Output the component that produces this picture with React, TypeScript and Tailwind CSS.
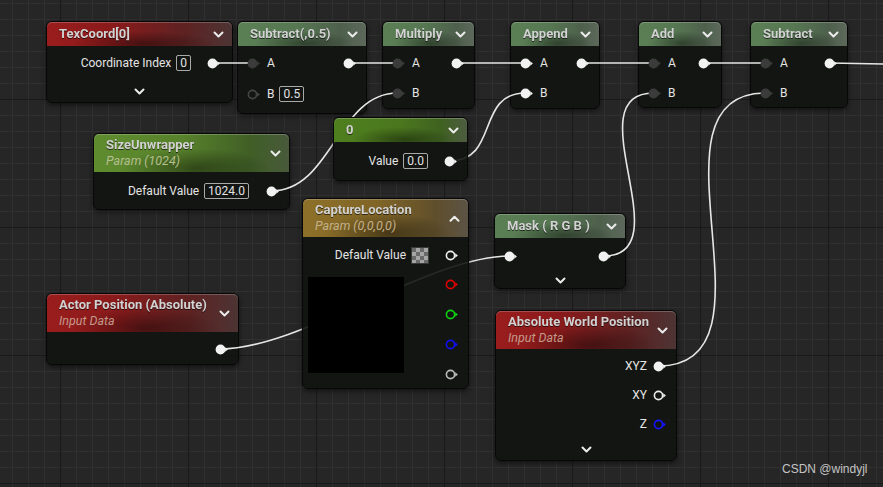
import React from "react";

type Tone = "red" | "fn" | "param" | "const" | "gold";

const TONES: Record<Tone, string> = {
  red: "bg-[linear-gradient(90deg,#9a1d1d_0%,#8a1a1b_35%,#5e2222_75%,#4d3434_100%)]",
  fn: "bg-[linear-gradient(90deg,#5b7f55_0%,#567752_45%,#4e604c_80%,#5c685b_100%)]",
  param: "bg-[linear-gradient(90deg,#5f8c2f_0%,#58822b_45%,#405f26_80%,#48593b_100%)]",
  const: "bg-[linear-gradient(90deg,#4e7f1e_0%,#4b771e_50%,#3f6220_80%,#4d5c41_100%)]",
  gold: "bg-[linear-gradient(90deg,#8d7028_0%,#806527_45%,#604f2b_80%,#5c5345_100%)]",
};

const SUBTITLE: Record<Tone, string> = {
  red: "text-[#c39a8a]",
  fn: "text-[#b0b8a8]",
  param: "text-[#b4be8e]",
  const: "text-[#b4be8e]",
  gold: "text-[#c2b08a]",
};

function Pin({ kind = "filled", color = "#f2f2f2" }: { kind?: "filled" | "empty" | "ring"; color?: string }) {
  const fill = kind === "filled" ? "#f2f2f2" : kind === "empty" ? "#3b3b3b" : "none";
  const tri = kind === "empty" ? "#3b3b3b" : kind === "ring" ? color : "#f2f2f2";
  return (
    <svg width="14" height="11" viewBox="0 0 14 11" className="relative z-20 shrink-0">
      <circle
        cx="5.5"
        cy="5.5"
        r={kind === "ring" ? 4.1 : 4.9}
        fill={fill}
        stroke={kind === "ring" ? color : "none"}
        strokeWidth={kind === "ring" ? 1.6 : 0}
      />
      <path d="M10.2 3.2 L12.9 5.5 L10.2 7.8 Z" fill={tri} />
    </svg>
  );
}

function Chevron({ up }: { up?: boolean }) {
  return (
    <svg width="11" height="7" viewBox="0 0 11 7">
      <path
        d={up ? "M1.5 5.8 L5.5 1.8 L9.5 5.8" : "M1.5 1.5 L5.5 5.5 L9.5 1.5"}
        stroke="#ececec"
        strokeWidth="2"
        fill="none"
        strokeLinecap="round"
        strokeLinejoin="round"
      />
    </svg>
  );
}

function Box({ children }: { children: React.ReactNode }) {
  return (
    <span className="rounded-[2px] border border-[#a9a9a9] px-[3px] text-[12px] leading-[16px] text-[#e2e2e2]">
      {children}
    </span>
  );
}

function Header({ tone, title, subtitle, up }: { tone: Tone; title: string; subtitle?: string; up?: boolean }) {
  return (
    <div
      className={`relative flex shrink-0 items-center justify-between rounded-t-[5px] pl-[12px] pr-[8px] shadow-[inset_0_1px_0_rgba(255,255,255,0.22)] ${TONES[tone]} ${subtitle ? "h-[38px]" : "h-[24px]"}`}
    >
      <div className="absolute inset-0 rounded-t-[5px] bg-[radial-gradient(ellipse_55%_75%_at_52%_90%,rgba(0,0,0,0.42),rgba(0,0,0,0)_70%)]" />
      <div className="relative flex flex-col">
        <span className="text-[13px] font-bold leading-[16px] text-[#d2d2d2] drop-shadow-[0_1px_0_rgba(0,0,0,0.6)]">{title}</span>
        {subtitle && <span className={`text-[12.5px] italic leading-[16px] ${SUBTITLE[tone]}`}>{subtitle}</span>}
      </div>
      <span className="relative flex">
        <Chevron up={up} />
      </span>
    </div>
  );
}

function Node({ pos, children }: { pos: string; children: React.ReactNode }) {
  return (
    <div
      className={`absolute flex flex-col rounded-[6px] border border-[#070707] bg-[#121412]/90 shadow-[0_2px_5px_rgba(0,0,0,0.55)] ${pos}`}
    >
      {children}
    </div>
  );
}

function BottomChevron({ mt }: { mt: string }) {
  return (
    <div className={`flex h-[16px] items-center justify-center ${mt}`}>
      <Chevron />
    </div>
  );
}

function MathNode({ pos, title, a, b, bPin, bBox, gap = "gap-[6px]" }: {
  pos: string;
  title: string;
  a: "filled" | "empty";
  b: "filled" | "empty" | "ring";
  bPin?: string;
  bBox?: string;
  gap?: string;
}) {
  return (
    <Node pos={pos}>
      <Header tone="fn" title={title} />
      <div className={`flex flex-col pt-[5px] ${gap}`}>
        <div className="flex h-[24px] items-center justify-between pl-[9px] pr-[9px]">
          <div className="flex items-center gap-[6px]">
            <Pin kind={a} />
            <span>A</span>
          </div>
          <Pin />
        </div>
        <div className="flex h-[24px] items-center pl-[9px]">
          <Pin kind={b} color={bPin} />
          <span className="ml-[6px]">B</span>
          {bBox && (
            <span className="ml-[5px]">
              <Box>{bBox}</Box>
            </span>
          )}
        </div>
      </div>
    </Node>
  );
}

function Grid() {
  return (
    <svg className="absolute inset-0" width="883" height="487">
      <defs>
        <pattern id="minor" x="12" y="3" width="16" height="16" patternUnits="userSpaceOnUse">
          <path d="M0 0.5 H16 M0.5 0 V16" stroke="#303030" strokeWidth="1" fill="none" />
        </pattern>
        <pattern id="major" x="60" y="99" width="128" height="128" patternUnits="userSpaceOnUse">
          <path d="M0 0.5 H128 M0.5 0 V128" stroke="#1a1a1a" strokeWidth="1.2" fill="none" />
        </pattern>
      </defs>
      <rect width="883" height="487" fill="#262626" />
      <rect width="883" height="487" fill="url(#minor)" />
      <rect width="883" height="487" fill="url(#major)" />
    </svg>
  );
}

function Wires() {
  const w = { stroke: "#e6e6e6", strokeWidth: 1.6, fill: "none" };
  return (
    <svg className="pointer-events-none absolute inset-0 z-10" width="883" height="487">
      <path d="M212.5 63 L252.5 63" {...w} />
      <path d="M348.5 63 L397.5 63" {...w} />
      <path d="M456.5 63 L525.5 63" {...w} />
      <path d="M581.5 63 L653.5 63" {...w} />
      <path d="M703.5 63 L765.5 63" {...w} />
      <path d="M829.5 63 L884 64" {...w} />
      <path d="M271.5 191 C331.5 191, 337.5 93, 397.5 93" {...w} />
      <path d="M449.5 161 C499.5 161, 475.5 93, 525.5 93" {...w} />
      <path d="M603.5 256 C683.5 256, 573.5 93, 653.5 93" {...w} />
      <path d="M658.5 366 C788.5 366, 635.5 93, 765.5 93" {...w} />
      <path d="M220.5 349 C300.5 349, 429.5 256, 509.5 256" {...w} />
    </svg>
  );
}

export default function App() {
  return (
    <div className="relative h-[487px] w-[883px] overflow-hidden bg-[#262626] font-['Roboto','Liberation_Sans',sans-serif] text-[12px] text-[#e4e4e4]">
      <Grid />

      {/* TexCoord */}
      <Node pos="left-[46px] top-[21px] w-[187px] h-[82px]">
        <Header tone="red" title="TexCoord[0]" />
        <div className="flex flex-col pt-[5px]">
          <div className="flex h-[24px] items-center justify-end pr-[11px]">
            <span>Coordinate Index</span>
            <span className="ml-[5px] mr-[16px]">
              <Box>0</Box>
            </span>
            <Pin />
          </div>
          <BottomChevron mt="mt-[8px]" />
        </div>
      </Node>

      <MathNode pos="left-[237px] top-[21px] w-[130px] h-[93px]" title="Subtract(,0.5)" a="empty" b="ring" bPin="#454545" bBox="0.5" gap="gap-[7px]" />
      <MathNode pos="left-[382px] top-[21px] w-[93px] h-[88px]" title="Multiply" a="empty" b="empty" />
      <MathNode pos="left-[510px] top-[21px] w-[90px] h-[88px]" title="Append" a="filled" b="filled" />
      <MathNode pos="left-[638px] top-[21px] w-[84px] h-[87px]" title="Add" a="empty" b="empty" />
      <MathNode pos="left-[750px] top-[21px] w-[98px] h-[87px]" title="Subtract" a="empty" b="empty" />

      {/* SizeUnwrapper */}
      <Node pos="left-[93px] top-[133px] w-[197px] h-[77px]">
        <Header tone="param" title="SizeUnwrapper" subtitle="Param (1024)" />
        <div className="flex h-[24px] items-center justify-end pr-[9px] mt-[7px]">
          <span>Default Value</span>
          <span className="ml-[5px] mr-[17px]">
            <Box>1024.0</Box>
          </span>
          <Pin />
        </div>
      </Node>

      {/* Constant 0 */}
      <Node pos="left-[333px] top-[117px] w-[135px] h-[64px] z-20">
        <Header tone="const" title="0" />
        <div className="flex h-[24px] items-center justify-end pr-[9px] mt-[7px]">
          <span>Value</span>
          <span className="ml-[5px] mr-[16px]">
            <Box>0.0</Box>
          </span>
          <Pin />
        </div>
      </Node>

      {/* CaptureLocation */}
      <Node pos="left-[302px] top-[198px] w-[167px] h-[191px] z-20">
        <Header tone="gold" title="CaptureLocation" subtitle="Param (0,0,0,0)" up />
        <div className="flex h-[24px] items-center justify-end pr-[9px] mt-[6px]">
          <span>Default Value</span>
          <span className="ml-[5px] mr-[16px] h-[17px] w-[18px] border border-[#3a3a3a] bg-[repeating-conic-gradient(#a5a5a5_0%_25%,#6a6a6a_0%_50%)] bg-[length:8px_8px]" />
          <Pin kind="ring" color="#f0f0f0" />
        </div>
        <div className="flex">
          <div className="ml-[5px] mt-[10px] h-[96px] w-[96px] bg-black" />
          <div className="ml-auto flex flex-col gap-[19px] pr-[9px] pt-[12px]">
            <Pin kind="ring" color="#e00000" />
            <Pin kind="ring" color="#10d010" />
            <Pin kind="ring" color="#1010f0" />
            <Pin kind="ring" color="#bcbcbc" />
          </div>
        </div>
      </Node>

      {/* Mask */}
      <Node pos="left-[494px] top-[213px] w-[132px] h-[76px]">
        <Header tone="fn" title="Mask ( R G B )" />
        <div className="flex h-[24px] items-center justify-between pl-[9px] pr-[13px] mt-[6px]">
          <Pin />
          <Pin />
        </div>
        <BottomChevron mt="mt-[4px]" />
      </Node>

      {/* Actor Position */}
      <Node pos="left-[46px] top-[293px] w-[193px] h-[72px]">
        <Header tone="red" title="Actor Position (Absolute)" subtitle="Input Data" />
        <div className="flex h-[24px] items-center justify-end pr-[9px] mt-[5px]">
          <Pin />
        </div>
      </Node>

      {/* Absolute World Position */}
      <Node pos="left-[495px] top-[310px] w-[182px] h-[151px]">
        <Header tone="red" title="Absolute World Position" subtitle="Input Data" />
        <div className="flex flex-col gap-[5px] pt-[5px]">
          <div className="flex h-[24px] items-center justify-end pr-[9px]">
            <span className="mr-[6px]">XYZ</span>
            <Pin />
          </div>
          <div className="flex h-[24px] items-center justify-end pr-[9px]">
            <span className="mr-[6px]">XY</span>
            <Pin kind="ring" color="#eeeeee" />
          </div>
          <div className="flex h-[24px] items-center justify-end pr-[9px]">
            <span className="mr-[6px]">Z</span>
            <Pin kind="ring" color="#1414ff" />
          </div>
        </div>
        <BottomChevron mt="mt-[5px]" />
      </Node>

      <Wires />

      <div className="absolute left-[782px] top-[461px] font-['Liberation_Sans',Arial,sans-serif] text-[12px] leading-[16px] text-[#c4c4c4]">
        CSDN @windyjl
      </div>
    </div>
  );
}
